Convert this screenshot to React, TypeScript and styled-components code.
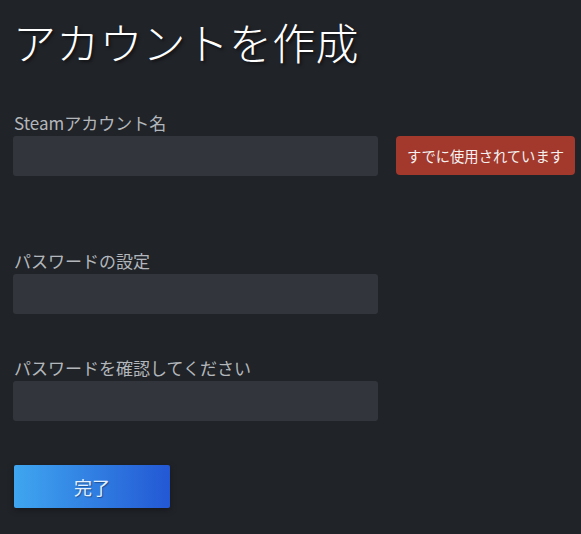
import React from 'react';
import styled, {createGlobalStyle} from 'styled-components';

const GlobalStyle = createGlobalStyle`
  html, body {
    margin: 0;
    padding: 0;
    background: #202328;
  }
  body {
    font-family: "Noto Sans CJK JP", "Noto Sans", sans-serif;
  }
`

const Page = styled.div`
  min-height: 534px;
  box-sizing: border-box;
  padding: 14px 0 0 13px;
  background: #202328;
`

const Title = styled.h1`
  margin: 0;
  font-size: 43px;
  line-height: 54px;
  font-weight: 300;
  color: #ffffff;
  text-shadow: 2px 2px 3px rgba(0, 0, 0, 0.5);
  letter-spacing: 0.2px;
`

const Field = styled.div<{ $top: number }>`
  display: flex;
  flex-direction: column;
  margin-top: ${p => p.$top}px;
`

const Label = styled.label`
  font-size: 17px;
  line-height: 20px;
  color: #b3b7bb;
  padding-left: 1px;
  margin-bottom: 3px;
`

const Row = styled.div`
  display: flex;
  align-items: flex-start;
  gap: 18px;
`

const Input = styled.input`
  width: 365px;
  height: 40px;
  box-sizing: border-box;
  border: none;
  border-radius: 3px;
  background: #32353c;
  color: #ffffff;
  padding: 0 10px;
  font-size: 15px;
  font-family: inherit;
  outline: none;
`

const ErrorBadge = styled.div`
  height: 39px;
  box-sizing: border-box;
  display: flex;
  align-items: center;
  padding: 0 11px;
  border-radius: 4px;
  background: #a2392c;
  color: #f4f1f0;
  font-size: 14.3px;
  white-space: nowrap;
`

const SubmitButton = styled.button`
  margin-top: 44px;
  margin-left: 1px;
  width: 156px;
  height: 43px;
  border: none;
  border-radius: 2px;
  background: linear-gradient(90deg, #3fa6f0 0%, #2358d4 100%);
  color: #e4f1ff;
  font-family: inherit;
  font-size: 18px;
  text-shadow: 1px 1px 1px rgba(0, 0, 0, 0.35);
  box-shadow: 0 2px 6px rgba(0, 0, 0, 0.35);
  cursor: pointer;
`

const App = () => {
    return (
        <>
            <GlobalStyle/>
            <Page>
                <Title>アカウントを作成</Title>

                <Field $top={45}>
                    <Label>Steamアカウント名</Label>
                    <Row>
                        <Input type="text"/>
                        <ErrorBadge>すでに使用されています</ErrorBadge>
                    </Row>
                </Field>

                <Field $top={75}>
                    <Label>パスワードの設定</Label>
                    <Input type="password"/>
                </Field>

                <Field $top={44}>
                    <Label>パスワードを確認してください</Label>
                    <Input type="password"/>
                </Field>

                <SubmitButton>完了</SubmitButton>
            </Page>
        </>
    );
};

export default App;
